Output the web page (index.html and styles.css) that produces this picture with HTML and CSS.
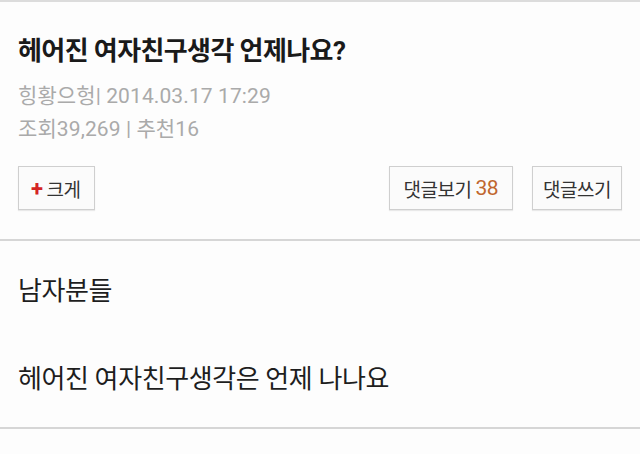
FILE: index.html
```html
<!DOCTYPE html>
<html lang="ko">
<head>
  <meta charset="UTF-8" />
  <meta name="viewport" content="width=device-width, initial-scale=1.0"/>
  <title>헤어진 여자친구생각 언제나요?</title>
  <link rel="stylesheet" href="styles.css">
</head>
<body>
  <div class="post">
    <div class="post-head">
      <h1 class="post-title">헤어진 여자친구생각 언제나요?</h1>
      <div class="post-meta">힝황으헝| 2014.03.17 17:29</div>
      <div class="post-meta">조회39,269 | 추천16</div>

      <div class="post-tools">
        <button class="tool-btn tool-btn-zoom"><span class="plus">+</span>크게</button>
        <div class="tools-right">
          <button class="tool-btn tool-btn-wide">댓글보기<span class="count">38</span></button>
          <button class="tool-btn">댓글쓰기</button>
        </div>
      </div>
    </div>

    <div class="post-body">
      <p>남자분들</p>
      <p>헤어진 여자친구생각은 언제 나나요</p>
    </div>
  </div>
</body>
</html>
```

FILE: styles.css
```css
body {
  margin: 0;
  background: #fdfdfd;
  color: #222;
  font-family: Roboto, "Noto Sans CJK KR", sans-serif;
}

.post {
  border-top: 2px solid #dcdcdc;
}

.post-head {
  padding: 34px 18px 29px;
  border-bottom: 2px solid #d6d6d6;
}

.post-title {
  margin: 0 0 14px;
  font-size: 26px;
  line-height: 30px;
  font-weight: bold;
  color: #1a1a1a;
  letter-spacing: -0.6px;
}

.post-meta {
  font-size: 21px;
  line-height: 33px;
  color: #aaa;
  letter-spacing: 0.1px;
}

.post-tools {
  display: flex;
  justify-content: space-between;
  margin-top: 20px;
}

.tools-right {
  display: flex;
  gap: 19px;
}

.tool-btn {
  height: 44px;
  padding: 0 10px;
  background: #fbfbfb;
  border: 1px solid #cfcfcf;
  box-shadow: 0 1px 1px rgba(0,0,0,0.08);
  font-family: Roboto, "Noto Sans CJK KR", sans-serif;
  font-size: 19px;
  color: #333;
  display: flex;
  align-items: center;
  letter-spacing: -0.5px;
}

.tool-btn-zoom {
  padding: 0 14px 0 12px;
}

.tool-btn-wide {
  padding: 0 14px;
}

.plus {
  color: #d42424;
  font-weight: bold;
  font-size: 22px;
  margin-right: 4px;
}

.count {
  color: #c0662e;
  font-size: 21px;
  margin-left: 4px;
}

.post-body {
  padding: 32px 18px 30px;
  border-bottom: 2px solid #d6d6d6;
}

.post-body p {
  margin: 0;
  font-size: 26px;
  line-height: 36px;
  color: #1e1e1e;
  letter-spacing: -0.4px;
}

.post-body p + p {
  margin-top: 52px;
}
```
